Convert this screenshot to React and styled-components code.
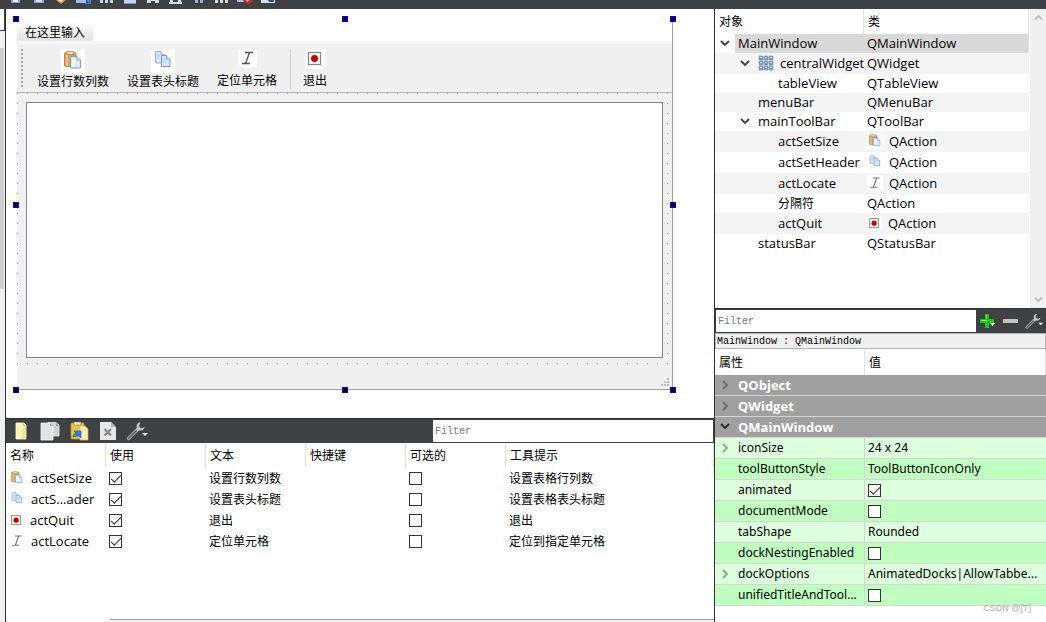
import React from 'react'
import styled, { createGlobalStyle } from 'styled-components'

function ClipboardIcon({ size = 24 }) {
    return (
        <svg width={size} height={size} viewBox="0 0 24 24">
            <rect x="3.5" y="3.5" width="11.5" height="14" rx="1.5" fill="#dda35a" stroke="#b98546" />
            <path d="M5 5h2v12H5z" fill="#eebf80" />
            <path d="M6 2.500h6.500v3H6z" fill="#f3e3b5" stroke="#a08a58" strokeWidth=".8" />
            <path d="M9.500 7.500h6.500l3.500 3.500v8h-10z" fill="#dfeaf9" stroke="#7b9fd4" />
            <path d="M16 7.500v3.500h3.500" fill="#fff" stroke="#7b9fd4" />
            <path d="M11 10h3v8h-3z" fill="#f2f7fe" />
        </svg>
    )
}

function CopyIcon({ size = 24 }) {
    return (
        <svg width={size} height={size} viewBox="0 0 24 24">
            <path d="M4.500 2.500h5.500l3 3v8.500h-8.500z" fill="#dbe8f8" stroke="#8dadda" />
            <path d="M10 2.500v3h3" fill="#fff" stroke="#8dadda" />
            <path d="M10.500 6.500h5l3.500 3.500v7.500h-8.500z" fill="#dbe8f8" stroke="#7499d0" />
            <path d="M15.500 6.500v3.500h3.500" fill="#fff" stroke="#7499d0" />
            <path d="M6 5h3v5H6zM12 9h2.500v5H12z" fill="#c5daf4" />
        </svg>
    )
}

function ItalicIcon({ size = 19, color = '#555' }) {
    return (
        <svg width={size} height={size} viewBox="0 0 19 19" fill="none" stroke={color} strokeWidth="1.300">
            <path d="M7 3.500h8M4 14.500h8M11.500 3.500L7.500 14.500" />
        </svg>
    )
}

function QuitIcon({ size = 20 }) {
    return (
        <svg width={size} height={size} viewBox="0 0 20 20">
            <rect x="3.500" y="3.500" width="12" height="12" fill="#fff" stroke="#858585" strokeWidth="1.200" />
            <circle cx="9.500" cy="9.500" r="3.500" fill="#c80000" />
        </svg>
    )
}

function GridIcon() {
    return (
        <svg width="16" height="16" viewBox="0 0 16 16">
            {[1, 6, 11].map((y) => [1, 6, 11].map((x) => (
                <g key={`${x}-${y}`}>
                    <rect x={x} y={y} width="4" height="4" rx=".8" fill="#7f9fc6" stroke="#6383ab" strokeWidth=".6" />
                    <rect x={x + 1} y={y + 1} width="2" height="1" fill="#d3e2f3" />
                </g>
            )))}
        </svg>
    )
}

function Chevron({ down, color = '#404040' }) {
    return (
        <svg width="10" height="10" viewBox="0 0 10 10" fill="none" stroke={color} strokeWidth="1.800">
            <path d={down ? 'M1 2l4 4 4-4' : 'M3 1l4 4-4 4'} />
        </svg>
    )
}

function WrenchIcon({ size = 24 }) {
    return (
        <svg width={size} height="20" viewBox="0 0 24 20">
            <path d="M3.500 17.500L12 9" stroke="#a9a9a9" strokeWidth="3.400" strokeLinecap="round" />
            <path d="M3.500 17.500L11.500 9.500" stroke="#56585a" strokeWidth="1.400" strokeLinecap="round" />
            <path d="M15.500 1.200c-3 .3-4.500 2.800-3.600 5.400l-1 2.200 1.700 1.500 2-1c2.500.8 4.800-.8 5-3.600l-2.500 1.500-2.300-.6-.7-2z" fill="#c6c6c6" />
            <path d="M17 12h6l-3 3z" fill="#eee" />
        </svg>
    )
}

function NewIcon() {
    return (
        <svg width="20" height="20" viewBox="0 0 20 20">
            <path d="M5 2h8l2 2v14H5z" fill="#fdf3b4" stroke="#fffbe0" strokeWidth=".8" />
            <path d="M12 3l3 3v12h-4z" fill="#f0dc83" opacity=".7" />
            <path d="M12 2v3h3z" fill="#c9b566" />
        </svg>
    )
}

function DuplicateIcon() {
    return (
        <svg width="22" height="20" viewBox="0 0 22 20">
            <path d="M9 1.500h8l3 2.500v11h-9z" fill="#cfcfcf" stroke="#eee" strokeWidth=".8" />
            <path d="M2 2h9l3 3v14H2z" fill="#e2e2e2" stroke="#f5f5f5" strokeWidth=".8" />
            <path d="M11 2v3h3zM17 2v3h3z" fill="#999" />
        </svg>
    )
}

function PasteIcon() {
    return (
        <svg width="20" height="20" viewBox="0 0 20 20">
            <rect x="2" y="2" width="13" height="16" rx="1" fill="#e8c43c" stroke="#c39a1e" strokeWidth=".8" />
            <path d="M5 1h7v3H5z" fill="#f4f0dc" stroke="#77704e" strokeWidth=".6" />
            <path d="M11 5h5l3 3v11h-8z" fill="#faeeb0" stroke="#d2b758" strokeWidth=".7" />
            <path d="M4 16c0-2 1-3 3-4L5 10h7v7l-2-2c-2 0-4 .5-6 1z" fill="#2e7de0" stroke="#1659ae" strokeWidth=".6" />
        </svg>
    )
}

function DeleteIcon() {
    return (
        <svg width="20" height="20" viewBox="0 0 20 20">
            <path d="M2 1h11l5 5v13H2z" fill="#e8e8e8" />
            <path d="M13 1v5h5z" fill="#b5b5b5" />
            <path d="M6.500 8l6.500 6.500M13 8l-6.500 6.500" stroke="#888" strokeWidth="2.200" />
        </svg>
    )
}

function PlusIcon() {
    return (
        <svg width="18" height="18" viewBox="0 0 18 18">
            <path d="M6 2h4v5h5v4h-5v5H6v-5H1V7h5z" fill="#22c51e" />
            <path d="M7 3h1v5H2v1h6" fill="#7cf078" />
            <path d="M11 11h5l-2.500 3z" fill="#eee" />
        </svg>
    )
}

function MinusIcon() {
    return (
        <svg width="18" height="18" viewBox="0 0 18 18">
            <rect x="1" y="7" width="15" height="4" rx=".5" fill="#c4c4c4" />
        </svg>
    )
}

// only the lower edge of the main tool bar is on screen
const stripIcons = [
    <><path d="M7 0h9v3H7z" fill="#7fa6dc" /><path d="M9 0h5v2H9z" fill="#e8f0fc" /></>,
    <><path d="M7 0h10v3H7z" fill="#8ba4cc" /><path d="M9 0h6v2H9z" fill="#d4e2f6" /></>,
    <><path d="M6 0h10l-5 4z" fill="#ee8a32" /><path d="M8 0h5l-2 2z" fill="#fff" /></>,
    <><path d="M3 0h10v3H3z" fill="#9cc0ee" /><path d="M13 0h5v4h-6V3h4z" fill="#4780d0" /></>,
    <><path d="M4 0h3v3H4zM9 0h3v3H9zM14 0h3v3h-3z" fill="#bfd2ec" /></>,
    <><path d="M5 0h12v3H5z" fill="#bfd4f2" /><path d="M5 3h12v1H5z" fill="#7a96bd" /></>,
    <><path d="M5 0h4v3H5zM13 0h4v3h-4zM9 0h4v1H9z" fill="#d9dde2" /></>,
    <><path d="M4 2h13v2H4zM5 0h3v2H5zM13 0h3v2h-3z" fill="#d9dde2" /></>,
    <><path d="M7 0h3v3H7zM12 0h3v3h-3z" fill="#8fb4de" /></>,
    <><path d="M4 0h3v3H4zM9 0h3v3H9zM14 0h3v3h-3z" fill="#d5d7da" /></>,
    <><path d="M3 0h7v2H3z" fill="#a9c3e6" /><path d="M9 0h10c-1 3-3 4-5 4s-4-1-5-4z" fill="#b82c2c" /><path d="M12 0h4l-3 2z" fill="#eea0a0" /></>,
    <><path d="M4 0h14v3H4z" fill="#cfe0f6" /><path d="M11 0h6v2h-5z" fill="#2c5578" /></>,
]

const toolActions = [
    { label: '设置行数列数', icon: <ClipboardIcon /> },
    { label: '设置表头标题', icon: <CopyIcon /> },
    { label: '定位单元格', icon: <ItalicIcon /> },
    { label: '退出', icon: <QuitIcon />, separator: true },
]

const editorButtons = [
    { title: 'New', icon: <NewIcon /> },
    { title: 'Copy', icon: <DuplicateIcon /> },
    { title: 'Paste', icon: <PasteIcon /> },
    { title: 'Delete', icon: <DeleteIcon /> },
    { title: 'Configure', icon: <WrenchIcon /> },
]

const actionRows = [
    { name: 'actSetSize', icon: <ClipboardIcon size={16} />, text: '设置行数列数', tip: '设置表格行列数' },
    { name: 'actS...ader', icon: <CopyIcon size={16} />, text: '设置表头标题', tip: '设置表格表头标题' },
    { name: 'actQuit', icon: <QuitIcon size={15} />, text: '退出', tip: '退出' },
    { name: 'actLocate', icon: <ItalicIcon size={16} color="#777" />, text: '定位单元格', tip: '定位到指定单元格' },
]

const objects = [
    { name: 'MainWindow', type: 'QMainWindow', level: 0, open: true, selected: true },
    { name: 'centralWidget', type: 'QWidget', level: 1, open: true, nameIcon: <GridIcon /> },
    { name: 'tableView', type: 'QTableView', level: 2 },
    { name: 'menuBar', type: 'QMenuBar', level: 1 },
    { name: 'mainToolBar', type: 'QToolBar', level: 1, open: true },
    { name: 'actSetSize', type: 'QAction', level: 2, icon: <ClipboardIcon size={16} /> },
    { name: 'actSetHeader', type: 'QAction', level: 2, icon: <CopyIcon size={16} /> },
    { name: 'actLocate', type: 'QAction', level: 2, icon: <ItalicIcon size={16} color="#777" /> },
    { name: '分隔符', type: 'QAction', level: 2, cjk: true },
    { name: 'actQuit', type: 'QAction', level: 2, icon: <QuitIcon size={15} /> },
    { name: 'statusBar', type: 'QStatusBar', level: 1 },
]

const groups = [
    { name: 'QObject' },
    { name: 'QWidget' },
    { name: 'QMainWindow', open: true },
]

const properties = [
    { name: 'iconSize', value: '24 x 24', expandable: true },
    { name: 'toolButtonStyle', value: 'ToolButtonIconOnly' },
    { name: 'animated', checked: true },
    { name: 'documentMode', checked: false },
    { name: 'tabShape', value: 'Rounded' },
    { name: 'dockNestingEnabled', checked: false },
    { name: 'dockOptions', value: 'AnimatedDocks|AllowTabbe...', expandable: true },
    { name: 'unifiedTitleAndTool...', checked: false },
]

function FormPreview() {
    return (
        <FormArea>
            <FormFrame>
                <MenuBar>
                    <MenuItem type="button">在这里输入</MenuItem>
                </MenuBar>
                <FormToolBar>
                    <Grip />
                    {toolActions.map((action) => (
                        <React.Fragment key={action.label}>
                            {action.separator && <Separator />}
                            <ToolButton type="button">
                                <ToolIcon>{action.icon}</ToolIcon>
                                {action.label}
                            </ToolButton>
                        </React.Fragment>
                    ))}
                </FormToolBar>
                <CentralWidget>
                    <TableView />
                </CentralWidget>
                <StatusBar>
                    <svg width="9" height="9" viewBox="0 0 9 9" fill="#bdbdbd">
                        <path d="M0 6h2v2H0zM3 6h2v2H3zM6 6h2v2H6zM3 3h2v2H3zM6 3h2v2H6zM6 0h2v2H6z" />
                    </svg>
                </StatusBar>
            </FormFrame>
            {['0%', '50%', '100%'].map((y) => ['0%', '50%', '100%'].map((x) => (
                (x !== '50%' || y !== '50%') && <Handle key={x + y} $x={x} $y={y} />
            )))}
        </FormArea>
    )
}

function ActionEditor() {
    return (
        <ActionPanel>
            <DarkBar>
                {editorButtons.map((button) => (
                    <BarButton key={button.title} type="button" aria-label={button.title} $width="29px">{button.icon}</BarButton>
                ))}
                <Spacer />
                <FilterInput type="text" placeholder="Filter" aria-label="Filter" $width="280px" />
            </DarkBar>
            <ActionTable>
                <colgroup>
                    <col width="100" /><col width="100" /><col width="100" /><col width="100" /><col width="100" /><col />
                </colgroup>
                <thead>
                    <tr>
                        {['名称', '使用', '文本', '快捷键', '可选的', '工具提示'].map((title) => (
                            <HeaderCell key={title}>{title}</HeaderCell>
                        ))}
                    </tr>
                </thead>
                <tbody>
                    {actionRows.map((row) => (
                        <tr key={row.name}>
                            <Cell><CellContent>{row.icon}{row.name}</CellContent></Cell>
                            <Cell><CheckBox type="checkbox" defaultChecked aria-label={`${row.name} 使用`} /></Cell>
                            <Cell $cjk>{row.text}</Cell>
                            <Cell />
                            <Cell><CheckBox type="checkbox" aria-label={`${row.name} 可选的`} /></Cell>
                            <Cell $cjk>{row.tip}</Cell>
                        </tr>
                    ))}
                </tbody>
            </ActionTable>
            <TabStrip><ActiveTab /><TabRest /></TabStrip>
        </ActionPanel>
    )
}

function ObjectInspector() {
    return (
        <TreePanel>
            <TreeView>
                <Table>
                    <colgroup><col width="149" /><col /></colgroup>
                    <thead>
                        <tr>
                            <HeaderCell>对象</HeaderCell>
                            <HeaderCell>类</HeaderCell>
                        </tr>
                    </thead>
                    <tbody>
                        {objects.map((item, index) => (
                            <TreeRow key={item.name} $striped={index % 2 === 1} $tall={item.icon || item.nameIcon}>
                                <TreeName>
                                    <TreeLine $level={item.level}>
                                        <Twisty>
                                            {item.open && <TwistyButton type="button" aria-label={item.name}><Chevron down /></TwistyButton>}
                                        </Twisty>
                                        <TreeLabel $selected={item.selected} $cjk={item.cjk}>{item.nameIcon}{item.name}</TreeLabel>
                                    </TreeLine>
                                </TreeName>
                                <TreeType $selected={item.selected}>
                                    <CellContent>{item.icon}{item.type}</CellContent>
                                </TreeType>
                            </TreeRow>
                        ))}
                    </tbody>
                </Table>
            </TreeView>
            <ScrollBar>
                <svg width="9" height="7" viewBox="0 0 9 7" fill="none" stroke="#bcbcbc" strokeWidth="1.800"><path d="M1 5.500l3.500-3.500 3.500 3.500" /></svg>
                <svg width="9" height="7" viewBox="0 0 9 7" fill="none" stroke="#bcbcbc" strokeWidth="1.800"><path d="M1 1.500l3.500 3.500 3.500-3.500" /></svg>
            </ScrollBar>
        </TreePanel>
    )
}

function PropertyEditor() {
    return (
        <PropertyPanel>
            <DarkBar>
                <FilterInput type="text" placeholder="Filter" aria-label="Filter" $grow />
                <BarButton type="button" aria-label="Add" $width="23px"><PlusIcon /></BarButton>
                <BarButton type="button" aria-label="Remove" $width="23px"><MinusIcon /></BarButton>
                <BarButton type="button" aria-label="Configure" $width="23px"><WrenchIcon size={20} /></BarButton>
            </DarkBar>
            <ObjectLabel>MainWindow : QMainWindow</ObjectLabel>
            <Table>
                <colgroup><col width="150" /><col /></colgroup>
                <thead>
                    <tr>
                        <HeaderCell $tall>属性</HeaderCell>
                        <HeaderCell $tall>值</HeaderCell>
                    </tr>
                </thead>
                <tbody>
                    {groups.map((group) => (
                        <tr key={group.name}>
                            <GroupCell colSpan={2}>
                                <TreeLine>
                                    <Twisty>
                                        <TwistyButton type="button" aria-label={group.name}>
                                            <Chevron down={group.open} color={group.open ? '#2b2b2b' : '#6c6c6c'} />
                                        </TwistyButton>
                                    </Twisty>
                                    <TreeLabel>{group.name}</TreeLabel>
                                </TreeLine>
                            </GroupCell>
                        </tr>
                    ))}
                    {properties.map((prop, index) => (
                        <PropertyRow key={prop.name} $dark={index % 2 === 1}>
                            <PropertyCell $divider>
                                <TreeLine>
                                    <Twisty>
                                        {prop.expandable && <TwistyButton type="button" aria-label={prop.name}><Chevron color="#8aa58a" /></TwistyButton>}
                                    </Twisty>
                                    <TreeLabel>{prop.name}</TreeLabel>
                                </TreeLine>
                            </PropertyCell>
                            <PropertyCell $value>
                                {prop.value || <CheckBox type="checkbox" defaultChecked={prop.checked} aria-label={prop.name} />}
                            </PropertyCell>
                        </PropertyRow>
                    ))}
                </tbody>
            </Table>
            <Watermark>CSDN @[T]</Watermark>
        </PropertyPanel>
    )
}

function App() {
    return (
        <>
            <GlobalStyle />
            <Window>
                <TopStrip>
                    {stripIcons.map((icon, index) => (
                        <svg key={index} width="23" height="5" viewBox="0 0 23 5">{icon}</svg>
                    ))}
                </TopStrip>
                <Workspace>
                    <WidgetBox>
                        <WidgetFilter />
                        <WidgetScroll><WidgetThumb /></WidgetScroll>
                    </WidgetBox>
                    <CenterColumn>
                        <Canvas><FormPreview /></Canvas>
                        <ActionEditor />
                    </CenterColumn>
                    <SideColumn>
                        <ObjectInspector />
                        <PropertyEditor />
                    </SideColumn>
                </Workspace>
            </Window>
        </>
    )
}

export default App

const latin = `"Open Sans", "Noto Sans CJK SC", sans-serif`;
const cjk = `"Noto Sans CJK SC", sans-serif`;
const mono = `"Liberation Mono", monospace`;

const GlobalStyle = createGlobalStyle`
    *{
        box-sizing:border-box;
    }
    body{
        margin:0;
        background-color:#fff;
        color:#000;
        font:13px/18px ${latin};
    }
    button{
        border:none;
        padding:0;
        background:transparent;
        color:inherit;
        font:inherit;
    }
    svg{
        display:block;
        flex:none;
    }
`;

const Window = styled.div`
    display:flex;
    flex-direction:column;
    min-height:100vh;
`;

const TopStrip = styled.div`
    display:flex;
    height:9px;
    padding-left:4px;
    background-color:#404142;
`;

const Workspace = styled.div`
    flex:1;
    display:flex;
`;

const WidgetBox = styled.div`
    display:flex;
    flex-direction:column;
    width:6px;
    background-color:#f0f0f0;
    border-right:1px solid #2e2f30;
`;

const WidgetFilter = styled.div`
    height:22px;
    background-color:#fff;
    border-right:1px solid #404142;
    border-bottom:1px solid #404142;
`;

const WidgetScroll = styled.div`
    flex:1;
    display:flex;
    flex-direction:column;
    padding:17px 1px 0 0;
`;

const WidgetThumb = styled.div`
    flex:0 0 42%;
    background-color:#cdcdcd;
`;

const CenterColumn = styled.div`
    flex:1;
    min-width:0;
    display:flex;
    flex-direction:column;
`;

const Canvas = styled.div`
    flex:1;
    display:flex;
    padding:10px 41px 28px 10px;
`;

const FormArea = styled.div`
    position:relative;
    flex:1;
    display:flex;
`;

const FormFrame = styled.div`
    flex:1;
    display:flex;
    flex-direction:column;
    border-right:1px solid #a0a0a0;
    border-bottom:1px solid #a0a0a0;
    padding-left:1px;
`;

// selection handles sit on top of the frame's border
const Handle = styled.span`
    position:absolute;
    left:${({ $x }) => $x};
    top:${({ $y }) => $y};
    width:6px;
    height:6px;
    margin:-3px 0 0 -3px;
    background-color:#000;
    border:1px solid #0000f0;
`;

const MenuBar = styled.div`
    display:flex;
    padding:3px 0 1px;
    border-bottom:1px solid #f0f0f0;
    margin-bottom:1px;
`;

const MenuItem = styled.button`
    height:19px;
    padding:0 8px;
    background-image:linear-gradient(#fff, #e2e2e2);
    font:12px/18px ${cjk};
`;

const FormToolBar = styled.div`
    display:flex;
    height:49px;
    padding:5px 4px 3px;
    background-color:#f0f0f0;
    border-bottom:1px solid #b4b4b4;
`;

const Grip = styled.span`
    width:2px;
    margin-right:5px;
    background-image:linear-gradient(#a8a8a8 50%, transparent 50%);
    background-size:2px 4px;
`;

const Separator = styled.span`
    width:1px;
    margin:0 3px 0 4px;
    background-color:#d0d0d0;
`;

const ToolButton = styled.button`
    display:flex;
    flex-direction:column;
    align-items:center;
    padding:0 9px;
    font:12px/18px ${cjk};
`;

const ToolIcon = styled.span`
    height:23px;
    >svg{
        background-color:#fff;
    }
`;

const CentralWidget = styled.div`
    flex:1;
    display:flex;
    padding:9px;
    background-color:#f0f0f0;
    background-image:linear-gradient(90deg, transparent 1px, #f0f0f0 1px), linear-gradient(#a0a0a0 1px, transparent 1px);
    background-size:10px 10px;
`;

const TableView = styled.div`
    flex:1;
    background-color:#fff;
    border:1px solid #828790;
`;

const StatusBar = styled.div`
    display:flex;
    align-items:flex-end;
    justify-content:flex-end;
    height:22px;
    padding:2px;
    background-color:#f0f0f0;
`;

const ActionPanel = styled.section`
    display:flex;
    flex-direction:column;
    min-height:204px;
`;

const DarkBar = styled.div`
    display:flex;
    align-items:flex-start;
    height:25px;
    padding:1px 1px 1px 0;
    background-color:#404142;
    border-top:1px solid #2e2f30;
`;

const Spacer = styled.div`
    flex:1;
`;

const BarButton = styled.button`
    display:flex;
    align-items:center;
    justify-content:center;
    width:${({ $width }) => $width};
    height:22px;
`;

const FilterInput = styled.input`
    align-self:stretch;
    flex:${({ $grow }) => ($grow ? 1 : 'none')};
    width:${({ $width }) => $width || 'auto'};
    min-width:0;
    margin-left:1px;
    padding:2px 2px 0;
    border:none;
    border-radius:0;
    outline:none;
    background-color:#fff;
    font:10px/18px ${mono};
    ::placeholder{
        color:#808080;
    }
`;

const Table = styled.table`
    width:100%;
    table-layout:fixed;
    border-collapse:separate;
    border-spacing:0;
    td, th{
        padding:0;
        overflow:hidden;
        white-space:nowrap;
        text-align:left;
    }
`;

const ActionTable = styled(Table)`
    margin-bottom:auto;
`;

const HeaderCell = styled.th`
    height:${({ $tall }) => ($tall ? '26px' : '25px')};
    border-right:1px solid #e2e2e2;
    font:12px/18px ${cjk};
    &&{
        padding:0 0 1px 4px;
    }
`;

const Cell = styled.td`
    height:21px;
    font:${({ $cjk }) => ($cjk ? `12px/18px ${cjk}` : 'inherit')};
    &&{
        padding:0 0 1px 3px;
    }
`;

const CellContent = styled.span`
    display:flex;
    align-items:center;
    gap:6px;
    >svg{
        background-color:#fff;
    }
`;

const CheckBox = styled.input`
    appearance:none;
    display:grid;
    place-items:center;
    width:13px;
    height:13px;
    margin:0;
    background-color:#fff;
    border:1px solid #333;
    &:checked::before{
        content:"";
        width:9px;
        height:4px;
        border-left:1px solid #333;
        border-bottom:1px solid #333;
        transform:translateY(-1px) rotate(-45deg);
    }
`;

const TabStrip = styled.div`
    display:flex;
    height:3px;
`;

const ActiveTab = styled.span`
    width:104px;
    border-left:1px solid #d9d9d9;
    border-right:1px solid #d9d9d9;
`;

const TabRest = styled.span`
    flex:1;
    background-color:#f0f0f0;
    border-top:1px solid #a0a0a0;
`;

const SideColumn = styled.aside`
    display:flex;
    flex-direction:column;
    width:332px;
    border-left:1px solid #2e2f30;
`;

const TreePanel = styled.section`
    flex:1;
    display:flex;
`;

const TreeView = styled.div`
    flex:1;
    min-width:0;
    margin-right:1px;
`;

const TreeRow = styled.tr`
    height:${({ $tall }) => ($tall ? '21px' : '19px')};
    background-color:${({ $striped }) => ($striped ? '#f4f4f4' : '#fff')};
`;

const TreeName = styled.td`
    height:inherit;
`;

const TreeType = styled.td`
    background-color:${({ $selected }) => ($selected ? '#d9d9d9' : 'transparent')};
    &&{
        padding:0 0 1px 3px;
    }
`;

const TreeLine = styled.div`
    display:flex;
    align-items:stretch;
    height:100%;
    padding-left:${({ $level = 0 }) => $level * 20}px;
`;

const Twisty = styled.span`
    flex:none;
    display:flex;
    align-items:center;
    justify-content:center;
    width:20px;
`;

const TwistyButton = styled.button`
    display:flex;
`;

const TreeLabel = styled.span`
    flex:1;
    display:flex;
    align-items:center;
    gap:6px;
    padding:0 0 1px 3px;
    background-color:${({ $selected }) => ($selected ? '#d9d9d9' : 'transparent')};
    font:${({ $cjk }) => ($cjk ? `12px/18px ${cjk}` : 'inherit')};
`;

const ScrollBar = styled.div`
    display:flex;
    flex-direction:column;
    align-items:center;
    justify-content:space-between;
    width:16px;
    padding:5px 0;
    background-color:#f0f0f0;
`;

const PropertyPanel = styled.section`
    position:relative;
    padding-bottom:16px;
`;

const ObjectLabel = styled.div`
    height:16px;
    padding:1px 1px 0;
    background-color:#f0f0f0;
    border:1px solid #b4b4b4;
    font:10px/14px ${mono};
`;

const GroupCell = styled.td`
    height:21px;
    background-color:#a0a0a0;
    border-bottom:1px solid #d4d4d4;
    color:#fff;
    font-weight:700;
`;

const PropertyRow = styled.tr`
    background-color:${({ $dark }) => ($dark ? '#c0ffc0' : '#ddffdd')};
    font:12px/18px "Noto Sans", sans-serif;
`;

const PropertyCell = styled.td`
    height:21px;
    border-bottom:1px solid #d4d4d4;
    border-right:${({ $divider }) => ($divider ? '1px solid #d4d4d4' : 'none')};
    &&{
        padding-left:${({ $value }) => ($value ? '3px' : '0')};
    }
`;

// laid over the last property row
const Watermark = styled.span`
    position:absolute;
    right:15px;
    bottom:8px;
    color:#aaa;
    font:9px/12px "Liberation Sans", sans-serif;
`;
